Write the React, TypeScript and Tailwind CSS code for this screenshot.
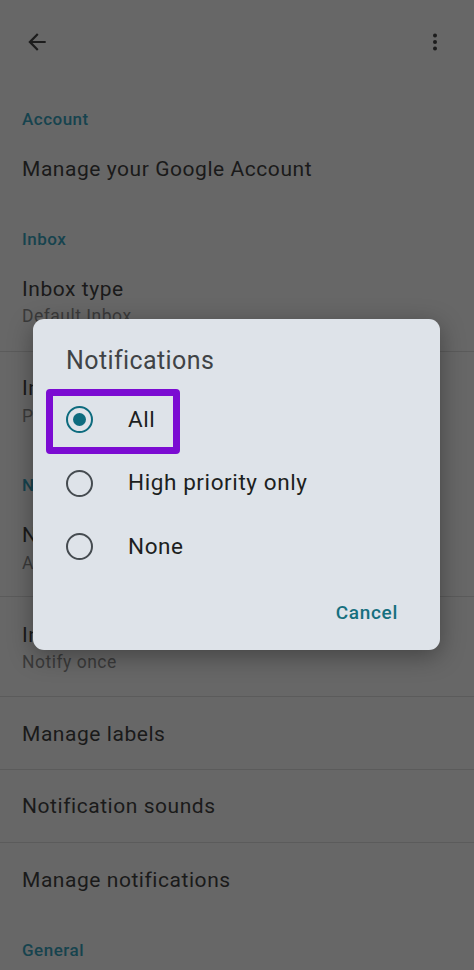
import { ReactNode } from "react";

const font = { fontFamily: "Roboto, 'Noto Sans', sans-serif" };

const BackArrow = () => (
	<svg width="26" height="26" viewBox="0 0 24 24" fill="#1c1c1c">
		<path d="M20 11H7.83l5.59-5.59L12 4l-8 8 8 8 1.41-1.41L7.83 13H20v-2z" />
	</svg>
);

const MoreVert = () => (
	<svg width="24" height="24" viewBox="0 0 24 24" fill="#1c1c1c">
		<circle cx="12" cy="5.5" r="2" />
		<circle cx="12" cy="12" r="2" />
		<circle cx="12" cy="18.5" r="2" />
	</svg>
);

const Header = ({ children, className }: { children: ReactNode; className: string }) => (
	<div className={`px-[22px] text-[17px] leading-[24px] font-medium tracking-[0.5px] text-[#16434e] ${className}`}>
		{children}
	</div>
);

const Title = ({ children, className }: { children: ReactNode; className: string }) => (
	<div className={`px-[22px] text-[21px] leading-[28px] tracking-[0.55px] text-[#1a1a1a] ${className}`}>
		{children}
	</div>
);

const Subtitle = ({ children, className }: { children: ReactNode; className: string }) => (
	<div className={`px-[22px] text-[17.5px] leading-[22px] tracking-[0.5px] text-[#3a3a3a] ${className}`}>
		{children}
	</div>
);

const Divider = ({ className }: { className: string }) => (
	<div className={`h-px bg-[#5b5b5b] ${className}`} />
);

const Radio = ({ checked }: { checked?: boolean }) => (
	<div
		className={`w-[27px] h-[27px] rounded-full border-[2.5px] flex items-center justify-center ${
			checked ? "border-[#0d6b7e]" : "border-[#454b50]"
		}`}>
		{checked && <div className="w-[13px] h-[13px] rounded-full bg-[#0d6b7e]" />}
	</div>
);

const options = ["All", "High priority only", "None"];

export default function App() {
	return (
		<div className="relative w-[474px] h-[970px] overflow-hidden bg-[#676767]" style={font}>
			<div className="h-[84px] flex items-center justify-between pl-[24px] pr-[27px]">
				<BackArrow />
				<MoreVert />
			</div>

			<Header className="mt-[23px]">Account</Header>
			<Title className="mt-[24px]">Manage your Google Account</Title>

			<Header className="mt-[44px]">Inbox</Header>
			<Title className="mt-[24px]">Inbox type</Title>
			<Subtitle className="mt-[2px]">Default Inbox</Subtitle>
			<Divider className="mt-[24px]" />
			<Title className="mt-[22px]">Inbox categories</Title>
			<Subtitle className="mt-[3px]">Primary</Subtitle>

			<Header className="mt-[46px]">Notifications</Header>
			<Title className="mt-[24px]">Notifications</Title>
			<Subtitle className="mt-[3px]">All</Subtitle>
			<Divider className="mt-[22px]" />
			<Title className="mt-[24px]">Inbox notifications</Title>
			<Subtitle className="mt-[2px]">Notify once</Subtitle>
			<Divider className="mt-[23px]" />
			<Title className="mt-[23px]">Manage labels</Title>
			<Divider className="mt-[21px]" />
			<Title className="mt-[22px]">Notification sounds</Title>
			<Divider className="mt-[22px]" />
			<Title className="mt-[23px]">Manage notifications</Title>

			<Header className="mt-[44px]">General</Header>

			{/* notifications dialog */}
			<div className="absolute left-[33px] top-[319px] w-[407px] h-[331px] rounded-[11px] bg-[#dee3e9] shadow-[0_6px_24px_rgba(0,0,0,0.35)] flex flex-col">
				<div className="pl-[33px] pt-[28px] text-[25px] leading-[28px] tracking-[0.4px] text-[#404346]">
					Notifications
				</div>
				<div className="mt-[13px] flex flex-col">
					{options.map((o, i) => (
						<div key={o} className="relative h-[63.5px] flex items-center pl-[33px]">
							<Radio checked={i === 0} />
							<span className="ml-[35px] text-[22.5px] tracking-[0.6px] text-[#1d1f21]">{o}</span>
							{i === 0 && (
								<div className="absolute left-[13px] top-[1px] w-[134px] h-[65px] rounded-[4px] border-[7px] border-[#7b0cd2]" />
							)}
						</div>
					))}
				</div>
				<div className="mt-auto mb-[25px] flex justify-end pr-[42px]">
					<span className="text-[19px] leading-[24px] font-medium text-[#16707f] tracking-[0.7px]">
						Cancel
					</span>
				</div>
			</div>
		</div>
	);
}
